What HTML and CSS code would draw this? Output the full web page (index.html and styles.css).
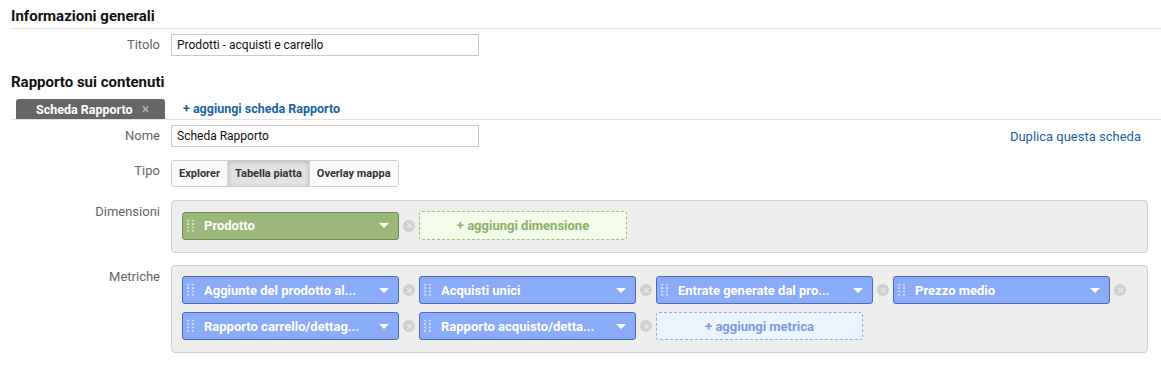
FILE: index.html
```html
<!DOCTYPE html>
<html lang="it">
<head>
  <meta charset="UTF-8" />
  <title>Rapporto personalizzato</title>
  <link rel="stylesheet" href="styles.css">
</head>
<body>

  <section class="section">
    <h2 class="section-title">Informazioni generali</h2>
    <div class="row row-first">
      <label class="row-label">Titolo</label>
      <div class="row-body">
        <input class="text-input" type="text" value="Prodotti - acquisti e carrello">
      </div>
    </div>
  </section>

  <section class="section">
    <h2 class="section-title plain">Rapporto sui contenuti</h2>

    <div class="tabs">
      <div class="tab">Scheda Rapporto <span class="tab-close">&times;</span></div>
      <a class="tab-add" href="#">+ aggiungi scheda Rapporto</a>
    </div>

    <div class="row row-nome">
      <label class="row-label">Nome</label>
      <div class="row-body spread">
        <input class="text-input" type="text" value="Scheda Rapporto">
        <a class="dup-link" href="#">Duplica questa scheda</a>
      </div>
    </div>

    <div class="row row-tipo">
      <label class="row-label">Tipo</label>
      <div class="row-body">
        <div class="btn-group">
          <button class="btn">Explorer</button>
          <button class="btn active">Tabella piatta</button>
          <button class="btn">Overlay mappa</button>
        </div>
      </div>
    </div>

    <div class="row row-box">
      <label class="row-label">Dimensioni</label>
      <div class="row-body">
        <div class="field-box">
          <div class="item">
            <div class="chip green"><span class="grip"></span><span class="chip-text">Prodotto</span><span class="caret"></span></div>
            <span class="remove"></span>
          </div>
          <div class="add-box add-green">+ aggiungi dimensione</div>
        </div>
      </div>
    </div>

    <div class="row row-box">
      <label class="row-label">Metriche</label>
      <div class="row-body">
        <div class="field-box">
          <div class="item">
            <div class="chip blue"><span class="grip"></span><span class="chip-text">Aggiunte del prodotto al...</span><span class="caret"></span></div>
            <span class="remove"></span>
          </div>
          <div class="item">
            <div class="chip blue"><span class="grip"></span><span class="chip-text">Acquisti unici</span><span class="caret"></span></div>
            <span class="remove"></span>
          </div>
          <div class="item">
            <div class="chip blue"><span class="grip"></span><span class="chip-text">Entrate generate dal pro...</span><span class="caret"></span></div>
            <span class="remove"></span>
          </div>
          <div class="item">
            <div class="chip blue"><span class="grip"></span><span class="chip-text">Prezzo medio</span><span class="caret"></span></div>
            <span class="remove"></span>
          </div>
          <div class="item">
            <div class="chip blue"><span class="grip"></span><span class="chip-text">Rapporto carrello/dettag...</span><span class="caret"></span></div>
            <span class="remove"></span>
          </div>
          <div class="item">
            <div class="chip blue"><span class="grip"></span><span class="chip-text">Rapporto acquisto/detta...</span><span class="caret"></span></div>
            <span class="remove"></span>
          </div>
          <div class="add-box add-blue">+ aggiungi metrica</div>
        </div>
      </div>
    </div>
  </section>

</body>
</html>
```

FILE: styles.css
```css
:root {
  --label-color: #666;
  --link-color: #1b63a3;
  --line-color: #e2e2e2;
  --green: #9bb87a;
  --green-border: #6e8c52;
  --blue: #8aabf7;
  --blue-border: #4d6bb3;
}

* {
  box-sizing: border-box;
  margin: 0;
  padding: 0;
}

body {
  font-family: Roboto, "Liberation Sans", sans-serif;
  color: #222;
  background: #fff;
}

.section-title {
  font-size: 15px;
  font-weight: 700;
  line-height: 18px;
  color: #111;
  margin-left: 11px;
  padding-top: 7px;
  padding-bottom: 3px;
  border-bottom: 1px solid var(--line-color);
}

.section-title.plain {
  border-bottom: none;
  padding-top: 0;
  padding-bottom: 0;
  margin-top: 17px;
}

.row {
  display: flex;
  align-items: flex-start;
  padding-left: 11px;
  padding-right: 13px;
}

.row-label {
  width: 149px;
  flex-shrink: 0;
  text-align: right;
  font-size: 13px;
  line-height: 22px;
  color: var(--label-color);
  margin-right: 11px;
}

.row-body {
  flex: 1;
}

.row-body.spread {
  display: flex;
  justify-content: space-between;
  align-items: center;
}

.row-first { margin-top: 5px; }
.row-nome { margin-top: 5px; }
.row-tipo { margin-top: 13px; }
.row-box { margin-top: 13px; }
.row-box .row-label { padding-top: 1px; }
.row-box + .row-box { margin-top: 12px; }

.text-input {
  width: 308px;
  height: 22px;
  border: 1px solid #c8c8c8;
  padding: 0 5px;
  font-family: inherit;
  font-size: 12px;
  color: #111;
  outline: none;
}

.dup-link {
  font-size: 13px;
  color: var(--link-color);
  text-decoration: none;
  margin-right: 7px;
}

/* tabs */
.tabs {
  display: flex;
  align-items: flex-end;
  margin-left: 11px;
  margin-top: 8px;
  padding-left: 5px;
  border-bottom: 1px solid var(--line-color);
  height: 21px;
}

.tab {
  width: 149px;
  height: 20px;
  background: #666;
  color: #fff;
  font-size: 12.5px;
  font-weight: 700;
  line-height: 20px;
  padding-left: 20px;
  border-radius: 3px 3px 0 0;
  white-space: nowrap;
}

.tab-close {
  color: #b5b5b5;
  font-weight: 400;
  font-size: 14px;
  margin-left: 6px;
}

.tab-add {
  font-size: 12.5px;
  font-weight: 700;
  color: var(--link-color);
  text-decoration: none;
  margin-left: 18px;
  line-height: 20px;
}

/* type buttons */
.btn-group {
  display: inline-flex;
  border: 1px solid #ccc;
  border-radius: 3px;
  overflow: hidden;
  height: 27px;
}

.btn {
  font-family: inherit;
  font-size: 11px;
  font-weight: 700;
  color: #333;
  background: #fafafa;
  border: none;
  border-left: 1px solid #d6d6d6;
  padding: 0 7px;
  height: 25px;
}

.btn:first-child { border-left: none; }

.btn.active {
  background: #e2e2e2;
  box-shadow: inset 0 1px 4px rgba(0,0,0,0.2);
}

/* dimension / metric boxes */
.field-box {
  display: flex;
  flex-wrap: wrap;
  gap: 8px 0;
  background: #eee;
  border: 1px solid #d0d0d0;
  border-radius: 4px;
  padding: 10px 10px 12px;
}

.item {
  display: flex;
  align-items: center;
}

.chip {
  width: 217px;
  height: 28px;
  border-radius: 3px;
  display: flex;
  align-items: center;
  color: #fff;
  font-size: 13px;
  font-weight: 700;
}

.chip.green {
  background: var(--green);
  border: 1px solid var(--green-border);
}

.chip.blue {
  background: var(--blue);
  border: 1px solid var(--blue-border);
}

.grip {
  width: 7px;
  height: 14px;
  margin-left: 4px;
  margin-right: 10px;
  background-image: radial-gradient(circle, rgba(255,255,255,0.9) 0.8px, transparent 1.2px);
  background-size: 5px 3.4px;
  background-position: -1.5px 0;
}

.chip-text {
  flex: 1;
  white-space: nowrap;
  overflow: hidden;
}

.caret {
  width: 0;
  height: 0;
  border-left: 5px solid transparent;
  border-right: 5px solid transparent;
  border-top: 5px solid #fff;
  margin-right: 9px;
}

.remove {
  width: 12px;
  height: 12px;
  margin: 0 4px;
  border-radius: 50%;
  background: #cfcfcf;
  position: relative;
}

.remove::before,
.remove::after {
  content: "";
  position: absolute;
  left: 5.5px;
  top: 2.5px;
  width: 1.2px;
  height: 7px;
  background: #eee;
  transform: rotate(45deg);
}

.remove::after {
  transform: rotate(-45deg);
}

.add-box {
  height: 29px;
  border-radius: 3px;
  font-size: 13px;
  font-weight: 700;
  display: flex;
  align-items: center;
  justify-content: center;
}

.add-green {
  width: 208px;
  background: #f3fbea;
  border: 1px dashed #9fc27a;
  color: #8cb068;
}

.add-blue {
  width: 207px;
  height: 28px;
  background: #eef4fe;
  border: 1px dashed #8aabf0;
  color: #7b9be6;
}
```
